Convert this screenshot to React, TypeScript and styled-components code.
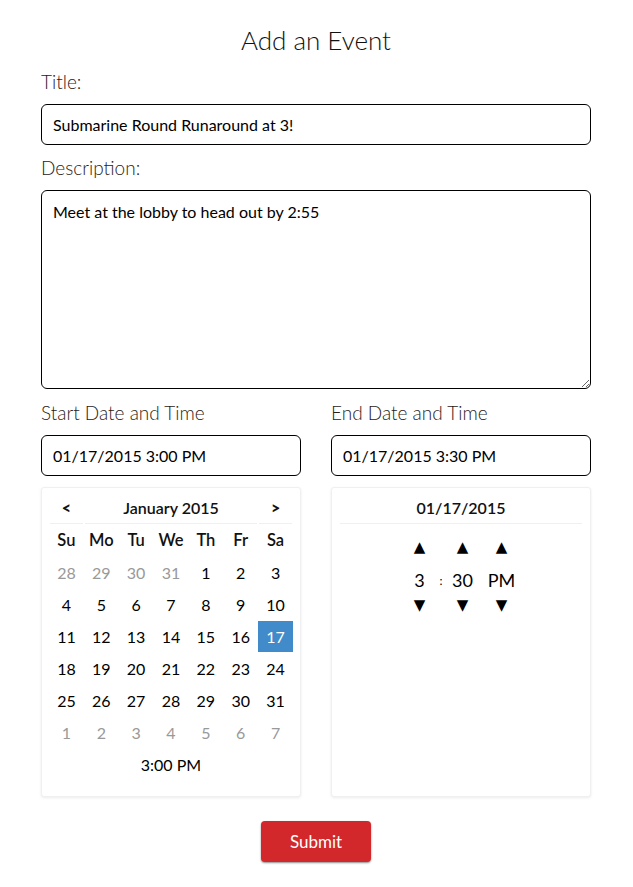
import React from "react";
import styled, { createGlobalStyle } from "styled-components";

const Global = createGlobalStyle`
  html, body { margin: 0; padding: 0; background: #fff; }
  body { font-family: "Lato", "Open Sans", sans-serif; color: #000; }
  * { box-sizing: border-box; }
`;

const Page = styled.div`
  width: 550px;
  margin: 0 0 0 41px;
  padding: 24px 0 20px;
  display: flex;
  flex-direction: column;
`;

const Heading = styled.h2`
  margin: 0;
  height: 32px;
  line-height: 32px;
  text-align: center;
  font-size: 26px;
  font-weight: 300;
  color: #111;
`;

const Field = styled.div<{ $top: number }>`
  display: flex;
  flex-direction: column;
  gap: 11px;
  margin-top: ${(p) => p.$top}px;
  min-width: 0;
`;

const Label = styled.label`
  height: 22px;
  line-height: 22px;
  font-size: 19px;
  font-weight: 300;
  color: #2a2218;
`;

const TextInput = styled.input`
  width: 100%;
  height: 41px;
  border: 1px solid #000;
  border-radius: 6px;
  padding: 0 11px;
  font-family: "Lato", sans-serif;
  font-size: 16px;
  color: #000;
  background: #fff;
  outline: none;
`;

const TextArea = styled.textarea`
  width: 100%;
  height: 199px;
  border: 1px solid #000;
  border-radius: 6px;
  padding: 11px 11px;
  font-family: "Lato", sans-serif;
  font-size: 16px;
  line-height: 20px;
  color: #000;
  background: #fff;
  outline: none;
  resize: vertical;
  display: block;
`;

const Columns = styled.div`
  display: grid;
  grid-template-columns: 260px 260px;
  column-gap: 30px;
`;

const PickerBox = styled.div`
  height: 310px;
  border: 1px solid #f0f0f0;
  border-radius: 3px;
  box-shadow: 0 1px 3px rgba(0, 0, 0, 0.08);
  padding: 4px 7px;
  background: #fff;
  display: flex;
  flex-direction: column;
`;

const CalGrid = styled.div`
  display: grid;
  grid-template-columns: repeat(7, 1fr);
  grid-auto-rows: 32px;
`;

const HeadCell = styled.div<{ $span?: number }>`
  grid-column: span ${(p) => p.$span || 1};
  margin: 0 1px;
  display: flex;
  align-items: center;
  justify-content: center;
  border-bottom: 1px solid #f0f0f0;
  font-size: 16px;
  font-weight: ${(p) => (p.$span ? 600 : 900)};
  color: #111;
`;

const Dow = styled.div`
  display: flex;
  align-items: center;
  justify-content: center;
  font-size: 16.5px;
  font-weight: 600;
  color: #111;
`;

const Day = styled.div<{ $muted?: boolean; $active?: boolean }>`
  display: flex;
  align-items: center;
  justify-content: center;
  height: 31px;
  margin-top: 1px;
  font-size: 16px;
  color: ${(p) => (p.$active ? "#fff" : p.$muted ? "#999" : "#000")};
  background: ${(p) => (p.$active ? "#428bca" : "transparent")};
`;

const TimeRow = styled.div`
  grid-column: span 7;
  display: flex;
  align-items: center;
  justify-content: center;
  font-size: 16px;
  color: #000;
`;

const DateHeader = styled.div`
  height: 32px;
  margin: 0 1px;
  display: flex;
  align-items: center;
  justify-content: center;
  border-bottom: 1px solid #f0f0f0;
  font-size: 16px;
  font-weight: 600;
  color: #111;
`;

const Clock = styled.div`
  margin-top: 8px;
  display: flex;
  justify-content: center;
`;

const ClockCol = styled.div<{ $w: number }>`
  width: ${(p) => p.$w}px;
  display: grid;
  grid-template-rows: 30px 30px 26px;
  justify-items: center;
  align-items: center;
`;

const Arrow = styled.span`
  font-family: "DejaVu Sans", sans-serif;
  font-size: 15px;
  color: #000;
  line-height: 1;
`;

const ClockValue = styled.span<{ $small?: boolean }>`
  font-size: ${(p) => (p.$small ? "12px" : "18px")};
  color: #000;
  padding-top: 6px;
`;

const SubmitRow = styled.div`
  display: flex;
  justify-content: center;
  margin-top: 24px;
`;

const Submit = styled.button`
  width: 110px;
  height: 41px;
  border: none;
  border-radius: 4px;
  background: #d2282b;
  color: #fff;
  font-family: "Lato", sans-serif;
  font-size: 17px;
  box-shadow: 0 1px 2px rgba(0, 0, 0, 0.45);
  cursor: pointer;
`;

const dows = ["Su", "Mo", "Tu", "We", "Th", "Fr", "Sa"];

type D = { n: number; muted?: boolean };
const days: D[] = [
  ...[28, 29, 30, 31].map((n) => ({ n, muted: true })),
  ...Array.from({ length: 31 }, (_, i) => ({ n: i + 1 })),
  ...[1, 2, 3, 4, 5, 6, 7].map((n) => ({ n, muted: true })),
];

export default function App() {
  return (
    <>
      <Global />
      <Page>
        <Heading>Add an Event</Heading>
        <Field $top={15}>
          <Label>Title:</Label>
          <TextInput readOnly value="Submarine Round Runaround at 3!" />
        </Field>
        <Field $top={12}>
          <Label>Description:</Label>
          <TextArea readOnly value="Meet at the lobby to head out by 2:55" />
        </Field>
        <Columns>
          <Field $top={13}>
            <Label>Start Date and Time</Label>
            <TextInput readOnly value="01/17/2015 3:00 PM" />
            <PickerBox>
              <CalGrid>
                <HeadCell>&lt;</HeadCell>
                <HeadCell $span={5}>January 2015</HeadCell>
                <HeadCell>&gt;</HeadCell>
                {dows.map((d) => (
                  <Dow key={d}>{d}</Dow>
                ))}
                {days.map((d, i) => (
                  <Day key={i} $muted={d.muted} $active={!d.muted && d.n === 17}>
                    {d.n}
                  </Day>
                ))}
                <TimeRow>3:00 PM</TimeRow>
              </CalGrid>
            </PickerBox>
          </Field>
          <Field $top={13}>
            <Label>End Date and Time</Label>
            <TextInput readOnly value="01/17/2015 3:30 PM" />
            <PickerBox>
              <DateHeader>01/17/2015</DateHeader>
              <Clock>
                <ClockCol $w={38}>
                  <Arrow>▲</Arrow>
                  <ClockValue>3</ClockValue>
                  <Arrow>▼</Arrow>
                </ClockCol>
                <ClockCol $w={5}>
                  <span />
                  <ClockValue $small>:</ClockValue>
                  <span />
                </ClockCol>
                <ClockCol $w={38}>
                  <Arrow>▲</Arrow>
                  <ClockValue>30</ClockValue>
                  <Arrow>▼</Arrow>
                </ClockCol>
                <ClockCol $w={40}>
                  <Arrow>▲</Arrow>
                  <ClockValue>PM</ClockValue>
                  <Arrow>▼</Arrow>
                </ClockCol>
              </Clock>
            </PickerBox>
          </Field>
        </Columns>
        <SubmitRow>
          <Submit>Submit</Submit>
        </SubmitRow>
      </Page>
    </>
  );
}
